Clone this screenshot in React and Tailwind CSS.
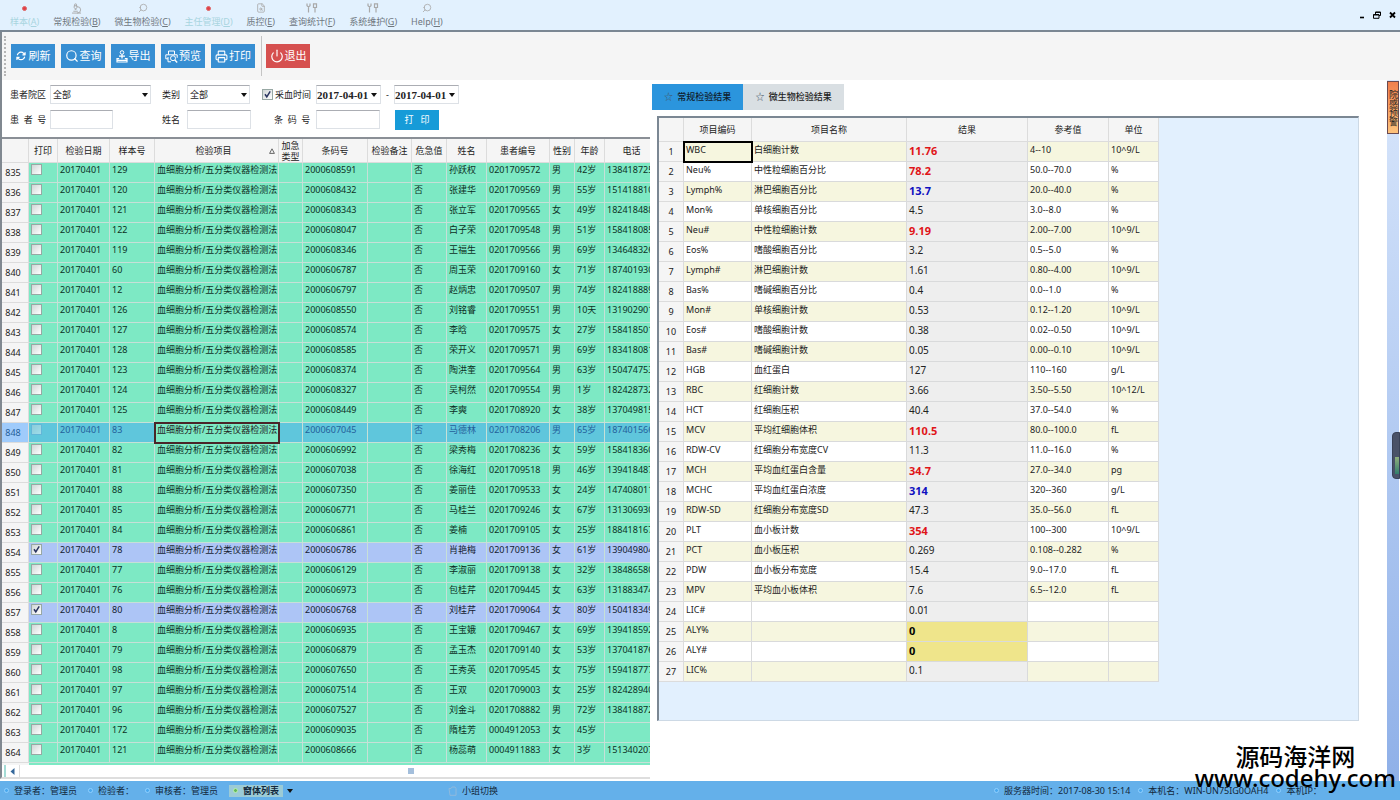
import React, { useState } from 'react';
import { FaArrowsRotate } from 'react-icons/fa6';
import { Search, Power, Printer, FileSearch, Wrench, Microscope } from 'lucide-react';

const menus = [
  { label: '样本', hot: 'A', icon: 'dot', dim: true },
  { label: '常规检验', hot: 'B', icon: 'scope' },
  { label: '微生物检验', hot: 'C', icon: 'search' },
  { label: '主任管理', hot: 'D', icon: 'dot', dim: true },
  { label: '质控', hot: 'E', icon: 'file' },
  { label: '查询统计', hot: 'F', icon: 'tools' },
  { label: '系统维护', hot: 'G', icon: 'tools' },
  { label: 'Help', hot: 'H', icon: 'search' },
];

const item = '血细胞分析/五分类仪器检测法';

// no, sample, barcode, name, patient no, sex, age, phone
const samples = [
  [835, '129', '2000608591', '孙跃权', '0201709572', '男', '42岁', '138418725'],
  [836, '120', '2000608432', '张建华', '0201709569', '男', '55岁', '151418810'],
  [837, '121', '2000608343', '张立军', '0201709565', '女', '49岁', '182418488'],
  [838, '122', '2000608047', '白子荣', '0201709548', '男', '51岁', '158418085'],
  [839, '119', '2000608346', '王福生', '0201709566', '男', '69岁', '134648326'],
  [840, '60', '2000606787', '周玉荣', '0201709160', '女', '71岁', '187401930'],
  [841, '12', '2000606797', '赵炳忠', '0201709507', '男', '74岁', '182418889'],
  [842, '126', '2000608550', '刘铭睿', '0201709551', '男', '10天', '131902901'],
  [843, '127', '2000608574', '李晗', '0201709575', '女', '27岁', '158418501'],
  [844, '128', '2000608585', '荣开义', '0201709571', '男', '69岁', '183418081'],
  [845, '123', '2000608374', '陶洪奎', '0201709564', '男', '63岁', '150474753'],
  [846, '124', '2000608327', '吴柯然', '0201709554', '男', '1岁', '182428732'],
  [847, '125', '2000608449', '李奭', '0201708920', '女', '38岁', '137049815'],
  [848, '83', '2000607045', '马德林', '0201708206', '男', '65岁', '187401566'],
  [849, '82', '2000606992', '梁秀梅', '0201708236', '女', '59岁', '158418360'],
  [850, '81', '2000607038', '徐海红', '0201709518', '男', '46岁', '139418487'],
  [851, '88', '2000607350', '姜丽佳', '0201709533', '女', '24岁', '147408011'],
  [852, '85', '2000606771', '马桂兰', '0201709246', '女', '67岁', '131306930'],
  [853, '84', '2000606861', '姜楠', '0201709105', '女', '25岁', '188418167'],
  [854, '78', '2000606786', '肖艳梅', '0201709136', '女', '61岁', '139049804'],
  [855, '77', '2000606129', '李淑丽', '0201709138', '女', '32岁', '138486580'],
  [856, '76', '2000606973', '包桂芹', '0201709445', '女', '63岁', '131883474'],
  [857, '80', '2000606768', '刘桂芹', '0201709064', '女', '80岁', '150418349'],
  [858, '8', '2000606935', '王宝娥', '0201709467', '女', '69岁', '139418592'],
  [859, '79', '2000606879', '孟玉杰', '0201709140', '女', '53岁', '137041876'],
  [860, '98', '2000607650', '王秀英', '0201709545', '女', '75岁', '159418777'],
  [861, '97', '2000607514', '王双', '0201709003', '女', '25岁', '182428940'],
  [862, '96', '2000607527', '刘金斗', '0201708882', '男', '72岁', '138418872'],
  [863, '172', '2000609035', '隋桂芳', '0004912053', '女', '45岁', ''],
  [864, '121', '2000608666', '杨蕊萌', '0004911883', '女', '3岁', '151340207'],
];

// code, name, result, reference, unit, flag
const results = [
  ['WBC', '白细胞计数', '11.76', '4--10', '10^9/L', 'high'],
  ['Neu%', '中性粒细胞百分比', '78.2', '50.0--70.0', '%', 'high'],
  ['Lymph%', '淋巴细胞百分比', '13.7', '20.0--40.0', '%', 'low'],
  ['Mon%', '单核细胞百分比', '4.5', '3.0--8.0', '%'],
  ['Neu#', '中性粒细胞计数', '9.19', '2.00--7.00', '10^9/L', 'high'],
  ['Eos%', '嗜酸细胞百分比', '3.2', '0.5--5.0', '%'],
  ['Lymph#', '淋巴细胞计数', '1.61', '0.80--4.00', '10^9/L'],
  ['Bas%', '嗜碱细胞百分比', '0.4', '0.0--1.0', '%'],
  ['Mon#', '单核细胞计数', '0.53', '0.12--1.20', '10^9/L'],
  ['Eos#', '嗜酸细胞计数', '0.38', '0.02--0.50', '10^9/L'],
  ['Bas#', '嗜碱细胞计数', '0.05', '0.00--0.10', '10^9/L'],
  ['HGB', '血红蛋白', '127', '110--160', 'g/L'],
  ['RBC', '红细胞计数', '3.66', '3.50--5.50', '10^12/L'],
  ['HCT', '红细胞压积', '40.4', '37.0--54.0', '%'],
  ['MCV', '平均红细胞体积', '110.5', '80.0--100.0', 'fL', 'high'],
  ['RDW-CV', '红细胞分布宽度CV', '11.3', '11.0--16.0', '%'],
  ['MCH', '平均血红蛋白含量', '34.7', '27.0--34.0', 'pg', 'high'],
  ['MCHC', '平均血红蛋白浓度', '314', '320--360', 'g/L', 'low'],
  ['RDW-SD', '红细胞分布宽度SD', '47.3', '35.0--56.0', 'fL'],
  ['PLT', '血小板计数', '354', '100--300', '10^9/L', 'high'],
  ['PCT', '血小板压积', '0.269', '0.108--0.282', '%'],
  ['PDW', '血小板分布宽度', '15.4', '9.0--17.0', 'fL'],
  ['MPV', '平均血小板体积', '7.6', '6.5--12.0', 'fL'],
  ['LIC#', '', '0.01', '', ''],
  ['ALY%', '', '0', '', '', 'zero'],
  ['ALY#', '', '0', '', '', 'zero'],
  ['LIC%', '', '0.1', '', ''],
];

const flagStyle = {
  high: 'bg-[#eeeeee] text-[11px] font-bold text-[#e01418]',
  low: 'bg-[#eeeeee] text-[11px] font-bold text-[#1010c0]',
  zero: 'bg-[#efe58b] text-[11px] font-bold text-black',
};

const fieldStyle = 'h-[19px] border border-[#dde1e6] border-t-[#abadb3] bg-white text-[9px] outline-none';

function MenuIcon({ type }) {
  if (type === 'dot') return <span className="size-[5px] rounded-full border border-[#d66] bg-[#e04048]" />;
  if (type === 'scope') return <Microscope size={11} strokeWidth={2} />;
  if (type === 'search') return <Search size={10} strokeWidth={2} className="-scale-x-100" />;
  if (type === 'file') return <FileSearch size={10} strokeWidth={2} />;
  return (
    <svg width="12" height="10" viewBox="0 0 12 10" fill="none" stroke="currentColor">
      <path d="M1 .5v2.2l1.5 1.2L4 2.7V.5M2.5 4v5.5" strokeWidth="1.2" />
      <path d="M7.5.8h3v3.7h-3zM9 4.5v5" strokeWidth="1.2" />
    </svg>
  );
}

function ExportIcon() {
  return (
    <svg width="12" height="13" viewBox="0 0 12 13" fill="none" stroke="currentColor">
      <circle cx="6" cy="2.5" r="1.8" />
      <path d="M6 4.5v4M3 6.2h6" strokeWidth="1.3" />
      <path d="M3.2 8.6H1v3.4h10V8.6H8.8M1 10.3h10" strokeWidth="1.2" />
    </svg>
  );
}

function PreviewIcon() {
  return (
    <svg width="13" height="13" viewBox="0 0 13 13" fill="none" stroke="currentColor">
      <path d="M3.5 4.5V1h6v3.5M3 8.8H.8V4.8h11.4v3" />
      <path d="M3 7v4.8h3" />
      <circle cx="8" cy="8.2" r="2.5" />
      <path d="M9.8 10l2.4 2.4" strokeWidth="1.4" />
    </svg>
  );
}

function Arrow() {
  return <svg width="6" height="4" viewBox="0 0 6 4" className="shrink-0"><path d="M0 0h6L3 4z" fill="#111" /></svg>;
}

function Check({ label, defaultChecked, id, dim }) {
  return (
    <span className="relative block size-[11px] shrink-0">
      <input
        id={id}
        type="checkbox"
        aria-label={label}
        defaultChecked={defaultChecked}
        className={`peer block size-[11px] appearance-none border bg-linear-to-br from-[#d0d6d6] to-white ${dim ? 'border-[#6b9fd0] opacity-40' : 'border-[#98a8a4]'}`}
      />
      <svg viewBox="0 0 11 11" className="pointer-events-none absolute inset-0 hidden size-[11px] peer-checked:block">
        <path d="M3 5.2l1.8 2.6L8.2 2.4" fill="none" stroke="#2a3560" strokeWidth="1.5" />
      </svg>
    </span>
  );
}

function ToolButton({ icon, label, color = 'bg-[#378ed2]' }) {
  return (
    <button className={`flex h-6 w-11 items-center justify-center gap-px text-[11px] text-white ${color}`}>
      {icon}
      <span>{label}</span>
    </button>
  );
}

function DropField({ id, width }) {
  return (
    <div className={`relative ${width}`}>
      <select id={id} className={`w-full appearance-none px-[2px] ${fieldStyle}`}>
        <option>全部</option>
      </select>
      <span className="pointer-events-none absolute right-[3px] top-2"><Arrow /></span>
    </div>
  );
}

function DateField({ label }) {
  return (
    <div className={`flex w-[65px] items-center justify-between pr-[3px] ${fieldStyle}`}>
      <input
        aria-label={label}
        defaultValue="2017-04-01"
        className="w-[53px] min-w-0 font-['Liberation_Serif',serif] text-[11px] font-bold outline-none"
      />
      <button aria-label="选择日期"><Arrow /></button>
    </div>
  );
}

function Filters() {
  return (
    <div className="grid h-[59px] grid-cols-[40px_112px_25px_75px_54px_auto] grid-rows-[25px_25px] items-center border-b-2 border-[#8a8f96] pl-2 pt-[2px]">
      <label htmlFor="area">患者院区</label>
      <DropField id="area" width="w-[101px]" />
      <label htmlFor="kind">类别</label>
      <DropField id="kind" width="w-[63px]" />
      <span className="flex items-center gap-[2px]">
        <Check id="drawn" defaultChecked />
        <label htmlFor="drawn">采血时间</label>
      </span>
      <div className="flex items-center gap-[5px]">
        <DateField label="开始日期" />
        <span>-</span>
        <DateField label="结束日期" />
      </div>
      <label htmlFor="pid" className="whitespace-pre">患  者  号</label>
      <input id="pid" className={`w-[63px] px-[2px] ${fieldStyle}`} />
      <label htmlFor="pname">姓名</label>
      <input id="pname" className={`w-16 px-[2px] ${fieldStyle}`} />
      <label htmlFor="barcode" className="whitespace-pre pl-3">条  码  号</label>
      <div className="flex items-center gap-[15px]">
        <input id="barcode" className={`w-16 px-[2px] ${fieldStyle}`} />
        <button className="h-5 w-11 whitespace-pre bg-[#169bd8] text-[9px] text-white">打   印</button>
      </div>
    </div>
  );
}

function SampleTable() {
  const th = 'h-6 border-b border-r border-[#dcdcdc] bg-[#f5f5f5] p-0 font-normal';
  return (
    <div className="min-h-0 flex-1 overflow-hidden">
      <table className="w-[657px] table-fixed border-separate border-spacing-0 whitespace-nowrap">
        <colgroup>
          <col className="w-[27px]" />
          <col className="w-[29px]" />
          <col className="w-[52px]" />
          <col className="w-[45px]" />
          <col className="w-[124px]" />
          <col className="w-6" />
          <col className="w-[65px]" />
          <col className="w-11" />
          <col className="w-[35px]" />
          <col className="w-10" />
          <col className="w-[63px]" />
          <col className="w-[25px]" />
          <col className="w-[30px]" />
          <col className="w-[54px]" />
        </colgroup>
        <thead>
          <tr>
            <th className={th} />
            <th className={th}>打印</th>
            <th className={th}>检验日期</th>
            <th className={th}>样本号</th>
            <th className={th}>
              <span className="flex items-center px-[3px]">
                <span className="flex-1">检验项目</span>
                <svg width="6" height="6" viewBox="0 0 6 6"><path d="M.6 5.4h4.8L3 .8z" fill="none" stroke="#444" strokeWidth=".8" /></svg>
              </span>
            </th>
            <th className={`whitespace-normal leading-[11px] ${th}`}>加急类型</th>
            <th className={th}>条码号</th>
            <th className={th}>检验备注</th>
            <th className={th}>危急值</th>
            <th className={th}>姓名</th>
            <th className={th}>患者编号</th>
            <th className={th}>性别</th>
            <th className={th}>年龄</th>
            <th className={th}>电话</th>
          </tr>
        </thead>
        <tbody>
          {samples.map(([no, sample, barcode, name, pid, sex, age, phone]) => {
            const selected = no === 848;
            const checked = no === 854 || no === 857;
            const bg = selected ? 'bg-[#5fc6dc] text-[#24609a]' : checked ? 'bg-[#adc5f6] text-[#141c30]' : 'bg-[#7de9c4] text-[#0c3025]';
            const td = `h-5 border-b border-r border-[#c6e0d7] p-0 pl-[2px] align-top leading-[13px] ${bg}`;
            return (
              <tr key={no}>
                <th className={`h-5 border-b border-r border-[#dcdcdc] p-0 pr-1 font-normal leading-[19px] ${selected ? 'bg-[#9fcbfb] text-[#24609a]' : 'bg-[#f5f5f5]'}`}>{no}</th>
                <td className={`${td} pt-px`}><Check label={`打印 ${no}`} defaultChecked={checked} dim={selected} /></td>
                <td className={td}>20170401</td>
                <td className={td}>{sample}</td>
                {selected
                  ? <td className="relative h-5 bg-[#7de9c4] p-0 pl-[2px] align-top leading-[13px] outline-2 -outline-offset-1 outline-[#4a2528]">{item}</td>
                  : <td className={td}>{item}</td>}
                <td className={td} />
                <td className={td}>{barcode}</td>
                <td className={td} />
                <td className={td}>否</td>
                <td className={td}>{name}</td>
                <td className={td}>{pid}</td>
                <td className={td}>{sex}</td>
                <td className={td}>{age}</td>
                <td className={td}>{phone}</td>
              </tr>
            );
          })}
          <tr>
            <th className="h-5 bg-[#f5f5f5]" />
            <td colSpan={13} className="h-5 bg-[#7de9c4]" />
          </tr>
        </tbody>
      </table>
    </div>
  );
}

function ResultTable() {
  const th = 'h-6 border-b border-r border-[#dcdcdc] bg-[#f5f5f5] p-0 font-normal';
  const td = 'h-5 border-b border-r border-[#d9dadb] p-0 pl-[2px] align-top';
  return (
    <table className="w-[500px] table-fixed border-separate border-spacing-0 whitespace-nowrap text-[#222]">
      <colgroup>
        <col className="w-[25px]" />
        <col className="w-[68px]" />
        <col className="w-[155px]" />
        <col className="w-[121px]" />
        <col className="w-[81px]" />
        <col className="w-[50px]" />
      </colgroup>
      <thead>
        <tr>
          <th className={th} />
          <th className={th}>项目编码</th>
          <th className={th}>项目名称</th>
          <th className={th}>结果</th>
          <th className={th}>参考值</th>
          <th className={th}>单位</th>
        </tr>
      </thead>
      <tbody>
        {results.map(([code, name, value, range, unit, flag], i) => (
          <tr key={code} className={i % 2 ? 'bg-white' : 'bg-[#f6f6df]'}>
            <th className="h-5 border-b border-r border-[#dcdcdc] bg-[#f5f5f5] p-0 font-normal leading-[19px]">{i + 1}</th>
            <td className={`${td} leading-[15px] ${i === 0 ? 'relative outline-2 -outline-offset-1 outline-black' : ''}`}>{code}</td>
            <td className={`${td} leading-[15px]`}>{name}</td>
            <td className={`${td} leading-[17px] ${flag ? flagStyle[flag] : 'bg-[#eeeeee] text-[10px]'}`}>{value}</td>
            <td className={`${td} leading-[15px]`}>{range}</td>
            <td className={`${td} leading-[15px]`}>{unit}</td>
          </tr>
        ))}
      </tbody>
    </table>
  );
}

function Status({ children }) {
  return (
    <span className="flex items-center gap-[5px] whitespace-nowrap">
      <span className="size-[5px] rounded-full border border-[#8fd0ff] bg-[#4aa8ee]" />
      {children}
    </span>
  );
}

export default function App() {
  const [tab, setTab] = useState(0);

  return (
    <div className="relative flex h-screen flex-col overflow-hidden bg-white font-['Noto_Sans','Noto_Sans_CJK_SC',sans-serif] text-[9px] leading-3 text-[#222]">
      <header className="flex h-8 shrink-0 justify-between border-b-2 border-[#7b8793] bg-[#e2f1fe]">
        <nav className="flex gap-[14px] pl-[10px]">
          {menus.map(m => (
            <button key={m.hot} className={`flex flex-col items-center ${m.dim ? 'text-[#a9d5e0]' : 'text-[#6f777e]'}`}>
              <span className="flex h-4 items-center text-[#a9a9a9]"><MenuIcon type={m.icon} /></span>
              <span>{m.label}(<u>{m.hot}</u>)</span>
            </button>
          ))}
        </nav>
        <div className="flex items-center gap-2 pr-1 text-black">
          <button aria-label="最小化"><svg width="6" height="8" viewBox="0 0 6 8"><path d="M1 6.5h4" stroke="currentColor" strokeWidth="1.6" /></svg></button>
          <button aria-label="还原">
            <svg width="8" height="8" viewBox="0 0 8 8" fill="none" stroke="currentColor"><path d="M2.5 3V1h5v3.5H6M2.5 1.4h5M.5 3.5H6v3.8H.5zM.5 4H6" /></svg>
          </button>
          <button aria-label="关闭"><svg width="7" height="8" viewBox="0 0 7 8"><path d="M1 1.5l5 5M6 1.5l-5 5" stroke="currentColor" strokeWidth="1.8" /></svg></button>
        </div>
      </header>

      <div className="flex h-12 shrink-0 items-center gap-[6px] border-l-2 border-[#808890] bg-[#f5f5f5]">
        <span className="-mr-px ml-[2px] h-10 border-l-2 border-dotted border-[#b5b5b5]" />
        <ToolButton label="刷新" icon={<FaArrowsRotate size={10} className="mr-[2px]" />} />
        <ToolButton label="查询" icon={<Search size={14} strokeWidth={2} className="shrink-0" />} />
        <ToolButton label="导出" icon={<ExportIcon />} />
        <ToolButton label="预览" icon={<PreviewIcon />} />
        <ToolButton label="打印" icon={<Printer size={13} strokeWidth={2} className="shrink-0" />} />
        <span className="-mr-[2px] h-10 border-l border-[#c4c4c4]" />
        <ToolButton label="退出" color="bg-[#d6504f]" icon={<Power size={14} strokeWidth={2} className="shrink-0" />} />
      </div>

      <main className="grid min-h-0 flex-1 grid-cols-[13fr_15fr]">
        <section className="mb-[2px] flex min-h-0 min-w-0 flex-col overflow-hidden border-b-2 border-l-2 border-b-[#dedede] border-l-[#808890]">
          <Filters />
          <SampleTable />
          <div className="flex h-3 shrink-0 items-center pl-[2px]">
            <span className="h-3 w-[2px] border border-[#a5dcd6]" />
            <button aria-label="向左滚动" className="mx-1"><svg width="5" height="7" viewBox="0 0 5 7"><path d="M4.5 0v7L.5 3.5z" fill="#35689b" /></svg></button>
            <span className="h-3 border-l border-[#ddd]" />
            <span className="ml-[60%] size-[6px] bg-[#a4bfdc]" />
          </div>
        </section>

        <section className="flex min-w-0">
          <div className="flex-1">
            <div className="flex pl-[2px] pt-1">
              {['常规检验结果', '微生物检验结果'].map((t, i) => (
                <button
                  key={t}
                  onClick={() => setTab(i)}
                  className={`h-[26px] px-3 font-medium ${tab === i ? 'bg-[#2b95dd] text-[#10202e]' : 'bg-[#d9dfe3] text-[#222]'}`}
                >
                  <span className="mr-[2px] text-[#456]">☆</span> {t}
                </button>
              ))}
            </div>
            <div className="ml-[7px] mr-7 mt-[6px] border-b border-l-2 border-r border-t-2 border-b-[#cdd9e5] border-l-[#7b8793] border-r-[#cdd9e5] border-t-[#7b8793] bg-[#e2f0fe] pb-[38px]">
              <ResultTable />
            </div>
          </div>
          <aside className="mr-px flex w-3 shrink-0 flex-col bg-linear-to-b from-[#d8e6fb] to-[#8fb0e8] pt-px">
            <button className="flex h-[53px] w-3 items-center justify-center border border-[#6b4a50] bg-linear-to-b from-[#f0804e] to-[#fdc27c] [writing-mode:vertical-rl]">院感预警</button>
          </aside>
        </section>
      </main>

      <footer className="flex h-[19px] shrink-0 items-center bg-[#64b0ea] text-[#12283c]">
        <div className="flex w-[32%] items-center gap-[11px] pl-1">
          <Status>登录者：管理员</Status>
          <Status>检验者：</Status>
          <Status>审核者：管理员</Status>
          <button className="flex items-center gap-1">
            <span className="flex items-center gap-[5px] bg-[#9ccbd6] px-1 font-bold">
              <span className="size-[5px] rounded-full border border-[#b8f0b0] bg-[#62b85c]" />
              窗体列表
            </span>
            <Arrow />
          </button>
        </div>
        <button className="flex items-center gap-1">
          <svg width="10" height="10" viewBox="0 0 10 10" fill="none" stroke="#8fb9dc"><path d="M1 2.5h2l1-1.5h3l1 1.5v6.8H2z" /></svg>
          小组切换
        </button>
        <div className="ml-auto flex w-[29%] items-center gap-2">
          <Status>服务器时间：2017-08-30 15:14</Status>
          <Status>本机名：WIN-UN75IG0OAH4</Status>
          <Status>本机IP：</Status>
        </div>
      </footer>

      {/* docked meter on the window edge */}
      <div className="absolute right-0 top-[432px] h-[47px] w-2 rounded-l border border-[#3a4258] bg-[#4a5268] pl-[2px] pt-6">
        <div className="h-[17px] w-1 bg-linear-to-b from-[#8fae7c] to-[#2f7f6c]" />
      </div>

      <div className="pointer-events-none absolute bottom-3 right-1 text-center text-2xl font-medium leading-[21px] text-black">
        <p>源码海洋网</p>
        <p>www.codehy.com</p>
      </div>
    </div>
  );
}
